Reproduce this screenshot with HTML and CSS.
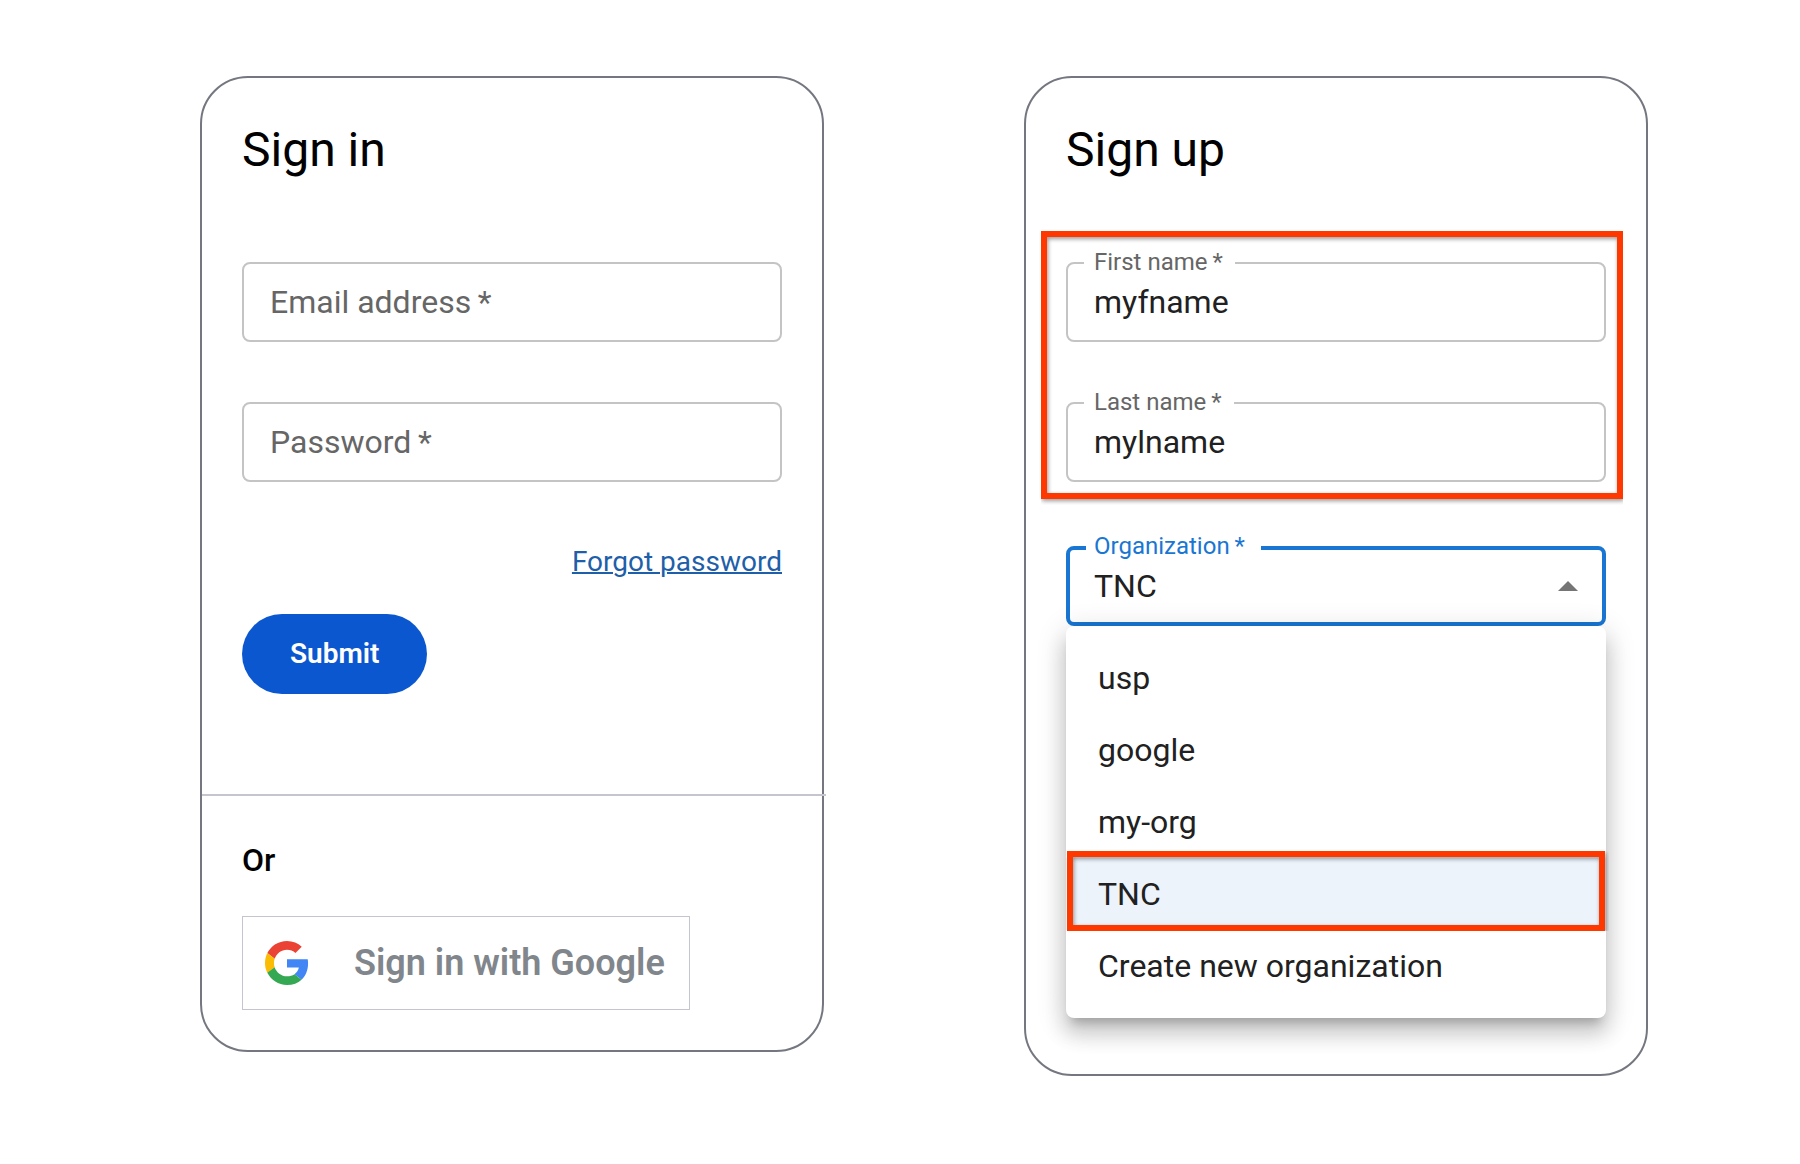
FILE: index.html
```html
<!DOCTYPE html>
<html lang="en">
<head>
  <meta charset="utf-8">
  <meta name="viewport" content="width=device-width, initial-scale=1">
  <title>Sign in or sign up</title>
  <link rel="stylesheet" href="styles.css">
</head>
<body>
  <main class="page">
    <section class="card">
      <h1 class="card-title">Sign in</h1>
      <form class="form">
        <div class="field">
          <input class="field-input" id="email" type="email" required>
          <label class="field-label" for="email">Email address&thinsp;*</label>
        </div>
        <div class="field">
          <input class="field-input" id="password" type="password" required>
          <label class="field-label" for="password">Password&thinsp;*</label>
        </div>
        <div class="form-actions">
          <a class="forgot-link" href="#forgot">Forgot password</a>
          <button class="submit-button" type="submit">Submit</button>
        </div>
      </form>
      <hr class="divider">
      <h2 class="alt-title">Or</h2>
      <button class="google-button" type="button">
        <svg class="google-logo" viewBox="0 0 48 48" aria-hidden="true">
          <path fill="#EA4335" d="M24 9.5c3.54 0 6.71 1.22 9.21 3.6l6.85-6.85C35.9 2.38 30.47 0 24 0 14.62 0 6.51 5.38 2.56 13.22l7.98 6.19C12.43 13.72 17.74 9.5 24 9.5z"/>
          <path fill="#4285F4" d="M46.98 24.55c0-1.57-.15-3.09-.38-4.55H24v9.02h12.94c-.58 2.96-2.26 5.48-4.78 7.18l7.73 6c4.51-4.18 7.09-10.36 7.09-17.65z"/>
          <path fill="#FBBC05" d="M10.53 28.59c-.48-1.45-.76-2.99-.76-4.59s.27-3.14.76-4.59l-7.98-6.19C.92 16.46 0 20.12 0 24c0 3.88.92 7.54 2.56 10.78l7.97-6.19z"/>
          <path fill="#34A853" d="M24 48c6.48 0 11.93-2.13 15.89-5.81l-7.73-6c-2.15 1.45-4.92 2.3-8.16 2.3-6.26 0-11.57-4.22-13.47-9.91l-7.98 6.19C6.51 42.62 14.62 48 24 48z"/>
        </svg>
        <span>Sign in with Google</span>
      </button>
    </section>

    <section class="card card-signup">
      <h1 class="card-title">Sign up</h1>
      <form class="form">
        <div class="field field-group">
          <div class="field">
            <input class="field-input" id="first-name" type="text" value="myfname" required>
            <label class="field-label floating" for="first-name">First name&thinsp;*</label>
          </div>
          <div class="field">
            <input class="field-input" id="last-name" type="text" value="mylname" required>
            <label class="field-label floating" for="last-name">Last name&thinsp;*</label>
          </div>
          <div class="highlight highlight-names"></div>
        </div>
        <div class="organization">
          <div class="field focused">
            <select class="field-input" id="organization" required>
              <option>usp</option>
              <option>google</option>
              <option>my-org</option>
              <option selected>TNC</option>
              <option>Create new organization</option>
            </select>
            <label class="field-label floating" for="organization">Organization&thinsp;*</label>
            <svg class="select-arrow" viewBox="0 0 20 10" aria-hidden="true"><path d="M0 10 10 0l10 10z"/></svg>
          </div>
          <ul class="menu" role="listbox" aria-label="Organization">
            <li class="menu-item" role="option">usp</li>
            <li class="menu-item" role="option">google</li>
            <li class="menu-item" role="option">my-org</li>
            <li class="menu-item selected" role="option" aria-selected="true">TNC<span class="highlight highlight-option"></span></li>
            <li class="menu-item" role="option">Create new organization</li>
          </ul>
        </div>
      </form>
    </section>
  </main>
</body>
</html>
```
FILE: styles.css
```css
* {
  box-sizing: border-box;
}

body {
  margin: 0;
  background: #fff;
  color: #000;
  font-family: Roboto, "Liberation Sans", sans-serif;
}

.page {
  display: grid;
  grid-template-columns: 1fr 1fr;
  align-items: start;
  gap: 200px;
  padding: 76px 152px 80px 200px;
}

.card {
  border: 2px solid #74777f;
  border-radius: 48px;
  padding: 40px;
}

.card-signup {
  padding-bottom: 56px;
}

.card-title {
  margin: 0 0 80px;
  font-size: 48px;
  font-weight: 400;
  line-height: 64px;
}

.form {
  display: flex;
  flex-direction: column;
  gap: 60px;
}

/* Outlined text fields */

.field {
  position: relative;
  display: grid;
  align-items: center;
}

.field-group {
  gap: 60px;
}

.field-input {
  grid-area: 1 / 1;
  width: 100%;
  height: 80px;
  margin: 0;
  padding: 0 26px;
  border: 2px solid #c4c4c4;
  border-radius: 8px;
  outline: 0;
  background: transparent;
  color: #212121;
  font: 400 32px/40px Roboto, "Liberation Sans", sans-serif;
  appearance: none;
}

.field-label {
  grid-area: 1 / 1;
  justify-self: start;
  padding-left: 28px;
  color: #666;
  font-size: 32px;
  line-height: 40px;
}

.floating {
  position: absolute;
  top: -12px;
  left: 18px;
  padding: 0 12px 0 10px;
  background: #fff;
  font-size: 24px;
  line-height: 24px;
}

.focused .field-input {
  padding: 0 24px;
  border: 4px solid #1976d2;
}

.focused .field-label {
  left: 20px;
  padding: 0 16px 0 8px;
  color: #1976d2;
}

.select-arrow {
  grid-area: 1 / 1;
  justify-self: end;
  width: 20px;
  height: 10px;
  margin-right: 28px;
  fill: #757575;
  pointer-events: none;
}

/* Sign-in actions */

.form-actions {
  display: flex;
  flex-direction: column;
  align-items: flex-start;
  gap: 32px;
}

.forgot-link {
  align-self: flex-end;
  color: #1f5fa9;
  font-size: 28px;
  line-height: 40px;
  text-decoration-thickness: 2px;
}

.submit-button {
  height: 80px;
  padding: 0 48px;
  border: 0;
  border-radius: 40px;
  background: #0b57d0;
  color: #fff;
  font: 600 28px/40px Roboto, "Liberation Sans", sans-serif;
}

.divider {
  height: 2px;
  margin: 100px -44px 44px -40px;
  border: 0;
  background: #c5c5d0;
}

.alt-title {
  margin: 0 0 36px;
  font-size: 32px;
  font-weight: 500;
  line-height: 40px;
}

.google-button {
  display: flex;
  align-items: center;
  gap: 45px;
  height: 94px;
  padding: 0 24px 0 22px;
  border: 1px solid #c5c5d0;
  background: #fff;
  color: #80868b;
  font: 600 36px/40px Roboto, "Liberation Sans", sans-serif;
}

.google-logo {
  width: 44px;
  height: 44px;
}

/* Organization menu */

.organization {
  padding-top: 4px;
}

.menu {
  position: relative;
  margin: 0;
  padding: 16px 0;
  border-radius: 8px;
  background: #fff;
  box-shadow:
    0 10px 10px -6px rgba(0, 0, 0, 0.2),
    0 16px 20px 2px rgba(0, 0, 0, 0.14),
    0 6px 28px 4px rgba(0, 0, 0, 0.12);
  list-style: none;
}

.menu-item {
  position: relative;
  padding: 16px 32px;
  color: #212121;
  font-size: 32px;
  line-height: 40px;
}

.selected {
  background: #ecf3fb;
}

/* Call-out frames */

.highlight {
  position: absolute;
  border: 6px solid #ff3800;
  filter: drop-shadow(1px 2px 2px rgba(0, 0, 0, 0.4));
  pointer-events: none;
}

.highlight-names {
  inset: -31px -17px -17px -25px;
  clip-path: inset(0 0 -6px 0);
}

.highlight-option {
  inset: -7px 1px -1px;
  clip-path: inset(0 -4px 0 0);
}
```
